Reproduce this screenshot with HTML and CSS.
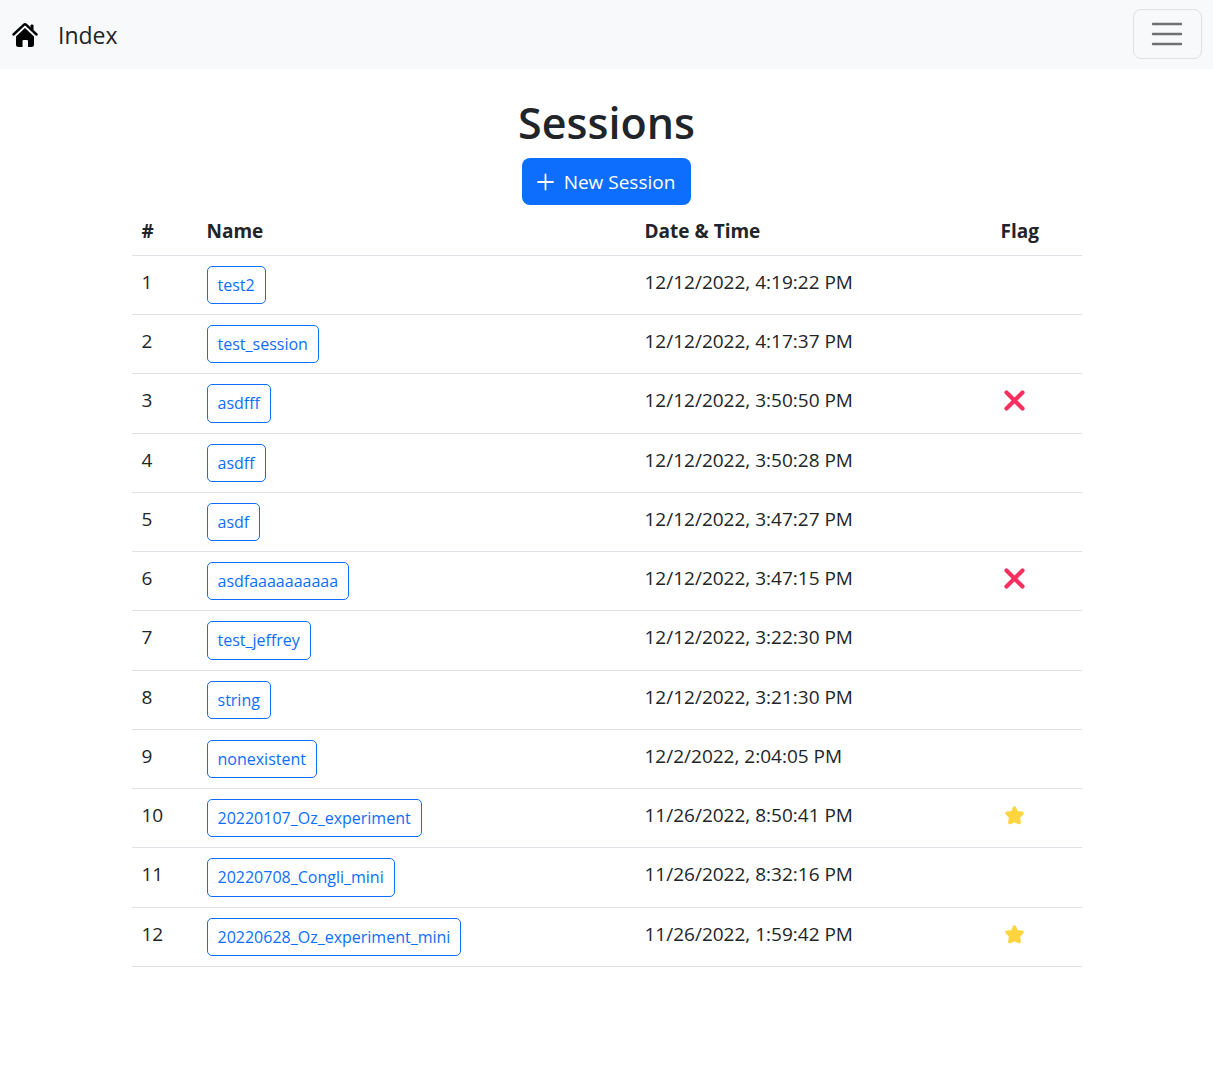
FILE: index.html
```html
<!DOCTYPE html>
<html lang="en">
<head>
<meta charset="utf-8">
<meta name="viewport" content="width=device-width, initial-scale=1">
<title>Sessions</title>
<link rel="stylesheet" href="styles.css">
</head>
<body>
<svg class="sprite" aria-hidden="true">
  <symbol id="cross" viewBox="0 0 26 28"><path d="M5.500 6.500L21.500 22.500M21.500 6.500L5.500 22.500" fill="none" stroke="#f92f60" stroke-width="4.200" stroke-linecap="round"/></symbol>
  <symbol id="star" viewBox="0 0 26 28"><path d="M13.500 7L15.600 11.600L21 12.300L17.300 16.200L18.200 21.600L13.500 19.500L8.800 21.600L9.700 16.200L6 12.300L11.400 11.600Z" fill="#fcd53f" stroke="#fcd53f" stroke-width="3.400" stroke-linejoin="round"/></symbol>
</svg>
<header class="navbar">
  <a class="brand" href="#">
    <svg class="home" viewBox="0 0 26 26" aria-hidden="true">
      <path d="M1.500 12.500L12 2.700Q13 1.900 14 2.700L24.500 12.500" fill="none" stroke="#000" stroke-width="2.400" stroke-linecap="round"/>
      <path d="M18.500 3.500Q18.500 2.500 20 2.500Q21.500 2.500 21.500 3.500V9L18.500 6Z"/>
      <path d="M13 6L22 14.500V22.500Q22 25 19.500 25H16V19Q16 18 15 18H11.500Q10.500 18 10.500 19V25H6.500Q4 25 4 22.500V14.500Z"/>
    </svg>
    <span>Index</span>
  </a>
  <button class="toggler" type="button" aria-label="Toggle navigation">
    <svg class="bars" viewBox="0 0 36 36" aria-hidden="true"><path d="M4 8H32M4 18H32M4 28H32" stroke="#6f7071" stroke-width="2.400" stroke-linecap="round"/></svg>
  </button>
</header>
<main class="container">
  <h1 class="title">Sessions</h1>
  <button class="new-session" type="button">
    <svg class="plus" viewBox="0 0 20 20" aria-hidden="true"><path d="M9.500 2.500V17.500M2 10H17" stroke="#fff" stroke-width="1.800" stroke-linecap="round"/></svg>
    New Session
  </button>
  <table class="sessions">
    <colgroup><col class="col-number"><col class="col-name"><col class="col-date"><col class="col-flag"></colgroup>
    <thead><tr><th scope="col">#</th><th scope="col">Name</th><th scope="col">Date &amp; Time</th><th scope="col">Flag</th></tr></thead>
    <tbody>
      <tr><td>1</td><td><button class="session" type="button">test2</button></td><td>12/12/2022, 4:19:22 PM</td><td></td></tr>
      <tr><td>2</td><td><button class="session" type="button">test_session</button></td><td>12/12/2022, 4:17:37 PM</td><td></td></tr>
      <tr><td>3</td><td><button class="session" type="button">asdfff</button></td><td>12/12/2022, 3:50:50 PM</td><td><svg class="flag" role="img" aria-label="Rejected"><use href="#cross"/></svg></td></tr>
      <tr><td>4</td><td><button class="session" type="button">asdff</button></td><td>12/12/2022, 3:50:28 PM</td><td></td></tr>
      <tr><td>5</td><td><button class="session" type="button">asdf</button></td><td>12/12/2022, 3:47:27 PM</td><td></td></tr>
      <tr><td>6</td><td><button class="session" type="button">asdfaaaaaaaaaa</button></td><td>12/12/2022, 3:47:15 PM</td><td><svg class="flag" role="img" aria-label="Rejected"><use href="#cross"/></svg></td></tr>
      <tr><td>7</td><td><button class="session" type="button">test_jeffrey</button></td><td>12/12/2022, 3:22:30 PM</td><td></td></tr>
      <tr><td>8</td><td><button class="session" type="button">string</button></td><td>12/12/2022, 3:21:30 PM</td><td></td></tr>
      <tr><td>9</td><td><button class="session" type="button">nonexistent</button></td><td>12/2/2022, 2:04:05 PM</td><td></td></tr>
      <tr><td>10</td><td><button class="session" type="button">20220107_Oz_experiment</button></td><td>11/26/2022, 8:50:41 PM</td><td><svg class="flag" role="img" aria-label="Starred"><use href="#star"/></svg></td></tr>
      <tr><td>11</td><td><button class="session" type="button">20220708_Congli_mini</button></td><td>11/26/2022, 8:32:16 PM</td><td></td></tr>
      <tr><td>12</td><td><button class="session" type="button">20220628_Oz_experiment_mini</button></td><td>11/26/2022, 1:59:42 PM</td><td><svg class="flag" role="img" aria-label="Starred"><use href="#star"/></svg></td></tr>
    </tbody>
  </table>
</main>
</body>
</html>
```
FILE: styles.css
```css
* { box-sizing: border-box; }
body {
  margin: 0;
  background: #fff;
  color: #212529;
  font-family: "Segoe UI", "Open Sans", sans-serif;
  font-size: 19px;
  line-height: 28px;
}
button { font-family: inherit; cursor: pointer; }
.sprite { display: none; }
.navbar {
  display: flex;
  align-items: center;
  justify-content: space-between;
  padding: 9px 11px 10px 12px;
  background: #f8f9fa;
}
.brand {
  display: flex;
  align-items: center;
  gap: 20px;
  padding-top: 2px;
  color: #212529;
  font-size: 23px;
  line-height: 36px;
  text-decoration: none;
}
.home { width: 26px; height: 26px; }
.toggler {
  display: flex;
  padding: 6px 16px 6px 15px;
  border: 1px solid #dee0e1;
  border-radius: 8px;
  background: transparent;
}
.bars { width: 36px; height: 36px; }
.container {
  display: flex;
  flex-direction: column;
  align-items: center;
  max-width: 950px;
  margin: 0 auto;
  padding: 24px 0;
}
.title {
  margin: 0 0 6px;
  font-size: 43px;
  font-weight: 600;
  line-height: 59px;
}
.new-session {
  display: flex;
  align-items: center;
  gap: 8px;
  padding: 10px 16px 9px 14px;
  border: 0;
  border-radius: 8px;
  background: #0d6efd;
  color: #fff;
  font-size: 19px;
  line-height: 28px;
}
.plus { width: 20px; height: 20px; }
.sessions {
  width: 100%;
  table-layout: fixed;
  border-collapse: collapse;
  margin-top: 2px;
}
.col-number { width: 65px; }
.col-date { width: 356px; }
.col-flag { width: 91px; }
.sessions th, .sessions td {
  padding: 10px;
  border-bottom: 1px solid #dee2e6;
  text-align: left;
  vertical-align: top;
}
.sessions th { font-weight: 700; }
.sessions td { line-height: 32px; }
.sessions .session {
  display: block;
  padding: 5px 10px;
  border: 1px solid #0d6efd;
  border-radius: 5px;
  background: transparent;
  color: #0d6efd;
  font-size: 16px;
  line-height: 1.64;
}
.flag { display: block; width: 26px; height: 32px; }
```
